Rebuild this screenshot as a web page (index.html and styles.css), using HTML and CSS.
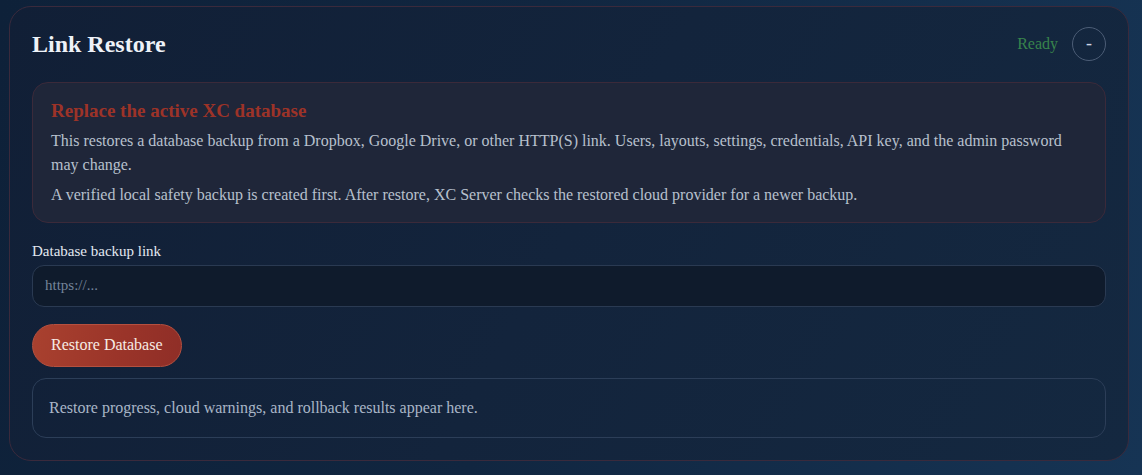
FILE: index.html
```html
<!DOCTYPE html>
<html lang="en">
<head>
<meta charset="utf-8">
<title>Link Restore</title>
<link rel="stylesheet" href="styles.css">
</head>
<body>
<section class="card">
  <header class="card-head">
    <h1 class="title">Link Restore</h1>
    <div class="head-right">
      <span class="status">Ready</span>
      <button class="collapse" type="button">-</button>
    </div>
  </header>
  <div class="warning">
    <h2 class="warning-title">Replace the active XC database</h2>
    <p class="warning-text">This restores a database backup from a Dropbox, Google Drive, or other HTTP(S) link. Users, layouts, settings, credentials, API key, and the admin password may change.</p>
    <p class="warning-text">A verified local safety backup is created first. After restore, XC Server checks the restored cloud provider for a newer backup.</p>
  </div>
  <label class="field-label" for="link">Database backup link</label>
  <input class="field-input" id="link" type="text" placeholder="https://...">
  <button class="restore" type="button">Restore Database</button>
  <div class="output">Restore progress, cloud warnings, and rollback results appear here.</div>
</section>
</body>
</html>
```

FILE: styles.css
```css
* { box-sizing: border-box; }
html, body { height: 100%; }
body {
  margin: 0;
  padding: 6px 13px 0 9px;
  font-family: "Liberation Serif", "Times New Roman", serif;
  background: linear-gradient(100deg, #0e2139 0%, #112640 45%, #163454 100%);
  color: #e6ebf2;
  overflow: hidden;
}
.card {
  display: flex;
  flex-direction: column;
  height: 455px;
  padding: 20px 22px 22px 22px;
  border: 1px solid #3a2a3c;
  border-radius: 22px;
  background: linear-gradient(120deg, #111f36 0%, #13243c 50%, #142840 100%);
}
.card-head {
  display: flex;
  align-items: center;
  justify-content: space-between;
  height: 34px;
}
.title {
  margin: 0;
  font-size: 24px;
  font-weight: bold;
  color: #eef2f8;
}
.head-right {
  display: flex;
  align-items: center;
  gap: 14px;
}
.status {
  font-size: 16px;
  color: #38844c;
}
.collapse {
  width: 34px;
  height: 34px;
  border-radius: 50%;
  border: 1px solid #4c5d76;
  background: transparent;
  color: #cdd6e2;
  font-family: "Liberation Serif", serif;
  font-size: 18px;
  padding: 0 0 2px;
  line-height: 1;
}
.warning {
  margin-top: 21px;
  padding: 16px 18px 15px;
  border: 1px solid #3b2a3a;
  border-radius: 16px;
  background: #1f2639;
}
.warning-title {
  margin: 0 0 7px;
  font-size: 19px;
  line-height: 23px;
  font-weight: bold;
  color: #9d3328;
}
.warning-text {
  margin: 0;
  font-size: 16px;
  line-height: 24px;
  color: #b7c0cd;
}
.warning-text + .warning-text { margin-top: 6px; }
.field-label {
  margin-top: 19px;
  font-size: 15px;
  line-height: 18px;
  color: #e2e8f0;
}
.field-input {
  margin-top: 5px;
  height: 42px;
  width: 100%;
  padding: 0 12px;
  border: 1px solid #2a3a52;
  border-radius: 12px;
  background: #0f1b2c;
  color: #dfe6ef;
  font-family: "Liberation Serif", serif;
  font-size: 15px;
  outline: none;
}
.field-input::placeholder { color: #75849a; }
.restore {
  align-self: flex-start;
  margin-top: 17px;
  height: 44px;
  padding: 0 18px;
  border: 1px solid #b5503f;
  border-radius: 22px;
  background: linear-gradient(100deg, #a9412f 0%, #9a3429 60%, #8f2e27 100%);
  color: #f6ebe4;
  font-family: "Liberation Serif", serif;
  font-size: 16px;
}
.output {
  margin-top: 11px;
  padding: 17px 16px;
  border: 1px solid #2c3e58;
  border-radius: 14px;
  font-size: 16px;
  line-height: 24px;
  color: #a9b6c7;
}
```
